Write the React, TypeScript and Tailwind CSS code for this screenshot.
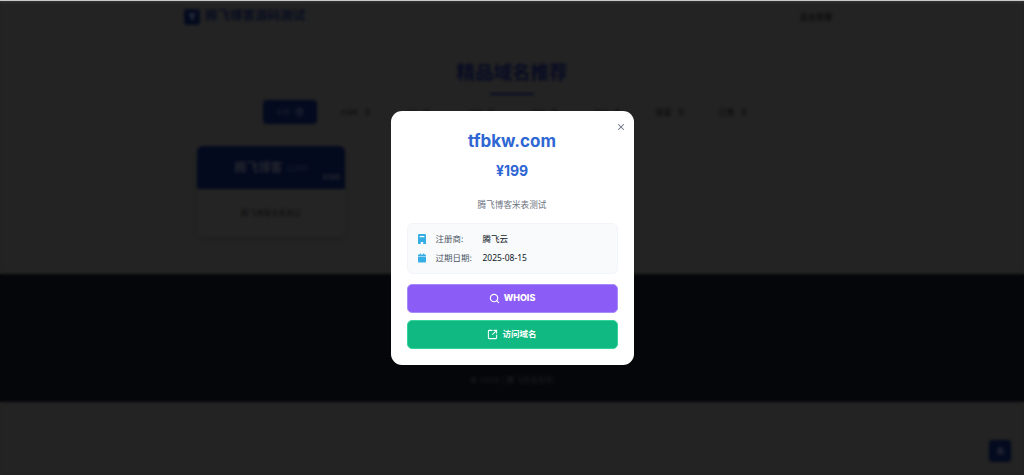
import { Search, SquareArrowOutUpRight, X, Bell } from 'lucide-react';
import { FaCalendar } from 'react-icons/fa';

const cjk = 'font-["Inter","Noto_Sans_CJK_SC",sans-serif]';

const tabs = [
    { label: '全部', count: 1, active: true },
    { label: '.com', count: 0 },
    { label: '.cn', count: 0 },
    { label: '.net', count: 0 },
    { label: '.org', count: 0 },
    { label: '.top', count: 0 },
    { label: '保留', count: 0 },
    { label: '已售', count: 0 },
];

function Page() {
    return (
        <div className="flex min-h-screen flex-col bg-[#464646]">
            <div className="h-px bg-[#c8c8c8]" />
            <header className="ml-[184px] flex h-[31px] w-[648px] items-center justify-between">
                <div className="flex items-center gap-[5px]">
                    <div className="flex h-4 w-4 items-center justify-center rounded-[3px] bg-[#0a163c] text-[9px] font-bold text-[#6c7490]">Y</div>
                    <span className="text-[12.5px] font-bold text-[#121c40]">腾飞博客源码测试</span>
                </div>
                <span className="text-[8px] font-medium text-[#111]">后台管理</span>
            </header>

            <main className="flex h-[242px] flex-col items-center">
                <h1 className="mt-[26px] text-[18.5px] leading-[28px] font-bold text-[#0e1644]">精品域名推荐</h1>
                <div className="mt-[7px] h-[2px] w-[44px] bg-[#0e1644]" />
                <div className="mt-[5px] mr-[3px] flex gap-3">
                    {tabs.map((t) => (
                        <div
                            key={t.label}
                            className={
                                t.active
                                    ? 'flex h-[24px] w-[54px] items-center justify-center gap-[5px] rounded-[4px] bg-[#08153e] text-[7px] text-[#363e5c]'
                                    : 'flex h-[24px] w-[51px] items-center justify-center gap-[7px] text-[8px] text-[#111]'
                            }
                        >
                            <span>{t.label}</span>
                            <span className={t.active ? 'rounded-full bg-white/10 px-[3px] font-medium' : 'font-medium'}>{t.count}</span>
                        </div>
                    ))}
                </div>
                <div className="mt-[22px] ml-[197px] h-[91px] w-[148px] self-start overflow-hidden rounded-[6px] bg-[#484848] shadow-md">
                    <div className="relative flex h-[43px] items-center justify-center bg-[#07143c]">
                        <span className="text-[12px] font-bold text-[#44485a]">腾飞博客</span>
                        <span className="ml-[2px] text-[10px] text-[#343c58]">.com</span>
                        <span className="absolute right-[5px] bottom-[6px] text-[7.5px] font-bold text-[#44485a]">¥199</span>
                    </div>
                    <div className="pt-[19px] text-center text-[7.5px] text-[#1e1e1e]">腾飞博客米表测试</div>
                </div>
            </main>

            <footer className="flex h-[128px] items-end justify-center bg-[#0a0c12] pb-[16px]">
                <span className="text-[8px] text-[#38383c]">© 2025 | 腾飞所有权利</span>
            </footer>

            <div className="flex-1" />
        </div>
    );
}

export default function App() {
    return (
        <div className={`relative h-[475px] overflow-hidden ${cjk}`}>
            <Page />

            <div className="fixed right-[13px] bottom-[13px] flex h-[22px] w-[22px] items-center justify-center rounded-[3px] bg-[#08153e]">
                <Bell className="h-[11px] w-[11px] fill-[#363e5c] text-[#363e5c]" />
            </div>

            {/* Modal overlay */}
            <div className="fixed inset-x-0 top-[1px] bottom-0 flex items-center justify-center bg-black/50 backdrop-blur-[1.5px]">
                <div className="relative -mt-px flex h-[254px] w-[243px] flex-col rounded-[11px] bg-white px-4 pt-[18px]">
                    <X className="absolute top-[11px] right-[8px] h-[10px] w-[10px] text-[#6b7280]" strokeWidth={2.5} />
                    <h2 className="text-center text-[17px] leading-[24px] font-bold text-[#2f66d4]">tfbkw.com</h2>
                    <p className="mt-[6px] text-center text-[14px] leading-[24px] font-bold text-[#2f66d4]">¥199</p>
                    <p className="mt-[15px] text-center text-[8.6px] leading-[14px] text-[#6b7280]">腾飞博客米表测试</p>
                    <div className="mt-[11px] flex h-[51px] flex-col justify-center gap-[5px] rounded-[6px] border border-[#f1f5f9] bg-[#f8fafc] px-[10px] pt-[1px] text-[8.5px]">
                        <div className="flex h-[14px] items-center">
                            <svg viewBox="0 0 8 10" className="h-[10px] w-[8px] fill-[#35aee6]">
                                <path d="M1 0h6a1 1 0 0 1 1 1v9H5.2V8H2.8v2H0V1a1 1 0 0 1 1-1zm.6 2v1.2h4.8V2z" fillRule="evenodd" />
                            </svg>
                            <span className="ml-[10px] w-[47px] text-[#4b5563]">注册商:</span>
                            <span className="text-[#111827]">腾飞云</span>
                        </div>
                        <div className="flex h-[14px] items-center">
                            <FaCalendar className="h-[10px] w-[8px] text-[#35aee6]" />
                            <span className="ml-[10px] w-[47px] text-[#4b5563]">过期日期:</span>
                            <span className='font-["Noto_Sans"] text-[#111827]'>2025-08-15</span>
                        </div>
                    </div>
                    <button className="mt-[10px] flex h-[29px] items-center justify-center gap-[4px] rounded-[5px] border border-[#a78bfa] bg-[#8b5cf6] text-[9px] font-extrabold text-white">
                        <Search className="h-[11px] w-[11px]" strokeWidth={2.5} />
                        WHOIS
                    </button>
                    <button className="mt-[7px] flex h-[29px] items-center justify-center gap-[4px] rounded-[5px] border border-[#34d399] bg-[#10b981] text-[8.5px] font-bold text-white">
                        <SquareArrowOutUpRight className="h-[11px] w-[11px]" strokeWidth={2.2} />
                        访问域名
                    </button>
                </div>
            </div>
        </div>
    );
}
